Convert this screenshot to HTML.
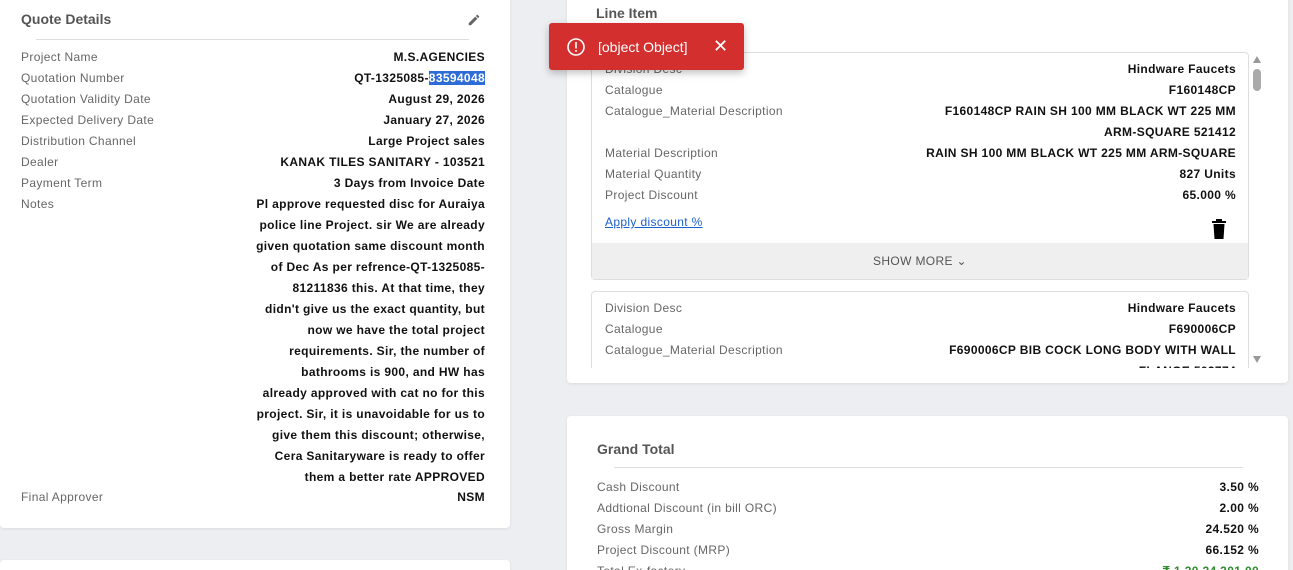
<!DOCTYPE html>
<html><head><style>
*{box-sizing:border-box;margin:0;padding:0}
html,body{width:1293px;height:570px;overflow:hidden}
body{background:#eceef1;font-family:"Liberation Sans",Arial,sans-serif;font-size:12px;letter-spacing:0.35px;position:relative}
.card{position:absolute;background:#fff;border-radius:4px;box-shadow:0 1px 3px rgba(0,0,0,.08)}
.row{display:flex;justify-content:space-between;height:21px;line-height:21px}
.l{color:#666}
.v{color:#111;font-weight:bold;text-align:right}
h3{font-size:14px;color:#555;font-weight:bold;letter-spacing:0}
.sel{background:#2d6bd6;color:#fff}
</style></head><body>
<div class="card" style="left:0;top:-10px;width:510px;height:538px">
  <h3 style="position:absolute;left:21px;top:21px">Quote Details</h3>
  <svg style="position:absolute;left:467px;top:23px" width="14" height="14" viewBox="0 0 24 24"><path fill="#666" d="M3 17.25V21h3.75L17.81 9.94l-3.75-3.75L3 17.25zM20.71 7.04a1 1 0 000-1.41l-2.34-2.34a1 1 0 00-1.41 0l-1.83 1.83 3.75 3.75 1.83-1.83z"/></svg>
  <div style="position:absolute;left:36px;top:49px;width:433px;border-top:1px solid #ddd"></div>
  <div style="position:absolute;left:21px;top:57px;width:464px">
    <div class="row"><span class="l">Project Name</span><span class="v">M.S.AGENCIES</span></div>
    <div class="row"><span class="l">Quotation Number</span><span class="v">QT-1325085-<span class="sel">83594048</span></span></div>
    <div class="row"><span class="l">Quotation Validity Date</span><span class="v">August 29, 2026</span></div>
    <div class="row"><span class="l">Expected Delivery Date</span><span class="v">January 27, 2026</span></div>
    <div class="row"><span class="l">Distribution Channel</span><span class="v">Large Project sales</span></div>
    <div class="row"><span class="l">Dealer</span><span class="v">KANAK TILES SANITARY - 103521</span></div>
    <div class="row"><span class="l">Payment Term</span><span class="v">3 Days from Invoice Date</span></div>
    <div class="row" style="height:auto;align-items:flex-start"><span class="l">Notes</span><span class="v">Pl approve requested disc for Auraiya<br>police line Project. sir We are already<br>given quotation same discount month<br>of Dec As per refrence-QT-1325085-<br>81211836 this. At that time, they<br>didn't give us the exact quantity, but<br>now we have the total project<br>requirements. Sir, the number of<br>bathrooms is 900, and HW has<br>already approved with cat no for this<br>project. Sir, it is unavoidable for us to<br>give them this discount; otherwise,<br>Cera Sanitaryware is ready to offer<br>them a better rate APPROVED</span></div>
    <div class="row" style="margin-top:-1px"><span class="l">Final Approver</span><span class="v">NSM</span></div>
  </div>
</div>
<div class="card" style="left:0;top:560px;width:510px;height:30px"></div>

<div class="card" style="left:567px;top:-10px;width:721px;height:393px">
  <h3 style="position:absolute;left:29px;top:15px">Line Item</h3>
  <div style="position:absolute;left:24px;top:62px;width:658px;height:316px;overflow:hidden">
    <div style="border:1px solid #ddd;border-radius:4px;height:228px;position:relative;background:#fff">
      <div style="position:absolute;left:13px;top:6px;width:631px">
        <div class="row"><span class="l">Division Desc</span><span class="v">Hindware Faucets</span></div>
        <div class="row"><span class="l">Catalogue</span><span class="v">F160148CP</span></div>
        <div class="row"><span class="l">Catalogue_Material Description</span><span class="v">F160148CP RAIN SH 100 MM BLACK WT 225 MM</span></div>
        <div class="row"><span class="l"></span><span class="v">ARM-SQUARE 521412</span></div>
        <div class="row"><span class="l">Material Description</span><span class="v">RAIN SH 100 MM BLACK WT 225 MM ARM-SQUARE</span></div>
        <div class="row"><span class="l">Material Quantity</span><span class="v">827 Units</span></div>
        <div class="row"><span class="l">Project Discount</span><span class="v">65.000 %</span></div>
        <div style="margin-top:9px;color:#1a5fd0;text-decoration:underline">Apply discount %</div>
      </div>
      <svg style="position:absolute;left:620px;top:166px" width="14" height="20" viewBox="0 0 14 20"><rect x="0" y="2" width="14" height="2" fill="#000"/><rect x="4" y="0" width="6" height="2" fill="#000"/><path d="M1.5 5h11l-1 15h-9z" fill="#000"/></svg>
      <div style="position:absolute;left:0;right:0;bottom:0;height:36px;background:#efefef;color:#555;text-align:center;line-height:36px;font-size:12px">SHOW MORE &#8964;</div>
    </div>
    <div style="border:1px solid #ddd;border-radius:4px;height:120px;margin-top:11px;position:relative">
      <div style="position:absolute;left:13px;top:6px;width:631px">
        <div class="row"><span class="l">Division Desc</span><span class="v">Hindware Faucets</span></div>
        <div class="row"><span class="l">Catalogue</span><span class="v">F690006CP</span></div>
        <div class="row"><span class="l">Catalogue_Material Description</span><span class="v">F690006CP BIB COCK LONG BODY WITH WALL</span></div>
        <div class="row"><span class="l"></span><span class="v">FLANGE 502774</span></div>
      </div>
    </div>
  </div>
  <div style="position:absolute;left:686px;top:66px;width:0;height:0;border-left:4px solid transparent;border-right:4px solid transparent;border-bottom:7px solid #999"></div>
  <div style="position:absolute;left:686px;top:79px;width:8px;height:22px;background:#aaa;border-radius:4px"></div>
  <div style="position:absolute;left:686px;top:366px;width:0;height:0;border-left:4px solid transparent;border-right:4px solid transparent;border-top:7px solid #999"></div>
</div>

<div style="position:absolute;left:549px;top:23px;width:195px;height:47px;background:#d32f2f;border-radius:3px;box-shadow:0 3px 8px rgba(0,0,0,.25);color:#fff;font-size:14px;letter-spacing:0">
  <svg style="position:absolute;left:18px;top:15px" width="18" height="18" viewBox="0 0 18 18"><circle cx="9" cy="9" r="8" fill="none" stroke="#fff" stroke-width="1.6"/><rect x="8.2" y="4" width="1.6" height="6.5" fill="#fff"/><rect x="8.2" y="12" width="1.6" height="1.8" fill="#fff"/></svg>
  <span style="position:absolute;left:49px;top:16px">[object Object]</span>
  <span style="position:absolute;left:164px;top:13px;font-size:18px">✕</span>
</div>

<div class="card" style="left:567px;top:416px;width:721px;height:170px">
  <h3 style="position:absolute;left:30px;top:25px">Grand Total</h3>
  <div style="position:absolute;left:47px;top:51px;width:629px;border-top:1px solid #ddd"></div>
  <div style="position:absolute;left:30px;top:61px;width:662px">
    <div class="row"><span class="l">Cash Discount</span><span class="v">3.50 %</span></div>
    <div class="row"><span class="l">Addtional Discount (in bill ORC)</span><span class="v">2.00 %</span></div>
    <div class="row"><span class="l">Gross Margin</span><span class="v">24.520 %</span></div>
    <div class="row"><span class="l">Project Discount (MRP)</span><span class="v">66.152 %</span></div>
    <div class="row"><span class="l">Total Ex-factory</span><span class="v" style="color:#2e8b2e">₹ 1,30,24,301.00</span></div>
  </div>
</div>
</body></html>
